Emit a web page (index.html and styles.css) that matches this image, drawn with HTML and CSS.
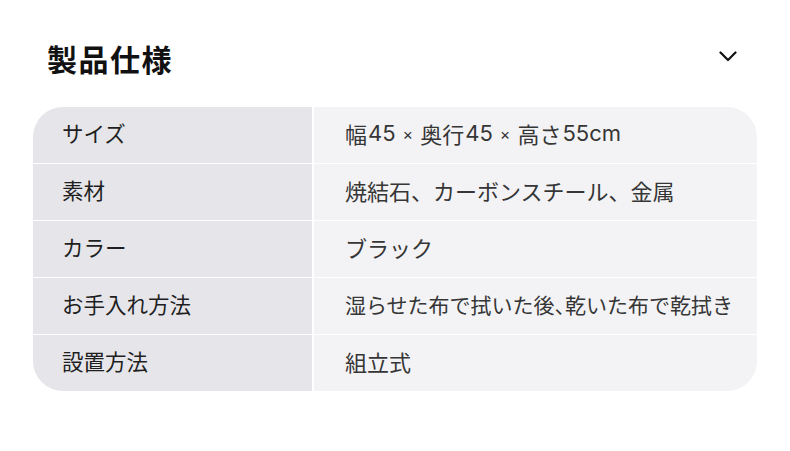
FILE: index.html
```html
<!DOCTYPE html>
<html lang="ja">
<head>
<meta charset="utf-8">
<link rel="stylesheet" href="styles.css">
</head>
<body>
<section class="spec">
  <div class="spec-header">
    <h2 class="spec-title">製品仕様</h2>
    <svg class="chevron" width="18" height="11" viewBox="0 0 18 11" aria-hidden="true">
      <path d="M1.5 1.5 L9 9 L16.5 1.5" fill="none" stroke="#111" stroke-width="2.2" stroke-linecap="round" stroke-linejoin="round"/>
    </svg>
  </div>
  <div class="spec-table">
    <div class="cell label">サイズ</div>
    <div class="cell value">幅<span class="latin">45</span><span class="times">×</span>奥行<span class="latin">45</span><span class="times">×</span>高さ<span class="latin">55cm</span></div>
    <div class="cell label">素材</div>
    <div class="cell value">焼結石、カーボンスチール、金属</div>
    <div class="cell label">カラー</div>
    <div class="cell value">ブラック</div>
    <div class="cell label">お手入れ方法</div>
    <div class="cell value fit">湿らせた布で拭いた後<span class="half">、</span>乾いた布で乾拭き</div>
    <div class="cell label">設置方法</div>
    <div class="cell value">組立式</div>
  </div>
</section>
</body>
</html>
```
FILE: styles.css
```css
html, body {
  margin: 0;
  padding: 0;
  background: #ffffff;
}
body {
  font-family: "Noto Sans CJK JP", "Noto Sans", sans-serif;
}
.spec {
  padding: 29px 33px 0 33px;
}
.spec-header {
  height: 60px;
  display: flex;
  align-items: center;
  justify-content: space-between;
  padding: 0 20px 0 14px;
  margin-bottom: 18px;
}
.spec-title {
  margin: 0;
  font-size: 30px;
  font-weight: 700;
  color: #111111;
  letter-spacing: 1.5px;
  line-height: 1;
  margin-top: -3px;
}
.chevron {
  display: block;
  margin-top: -5px;
}
.spec-table {
  display: grid;
  grid-template-columns: 279px 1fr;
  grid-auto-rows: 56px;
  column-gap: 2px;
  row-gap: 1px;
  border-radius: 30px;
  overflow: hidden;
  background: #ffffff;
}
.cell {
  display: flex;
  align-items: center;
  font-size: 22px;
  line-height: 1;
  padding-bottom: 4px;
  box-sizing: border-box;
}
.label {
  background: #e6e6ea;
  padding-left: 29px;
  font-size: 21.5px;
  color: #1f1f1f;
}
.value {
  background: #f3f3f5;
  padding-left: 31px;
  color: #363636;
}
.value.fit {
  font-size: 21px;
}
.latin {
  font-family: "Inter", "Noto Sans", sans-serif;
  font-size: 22px;
  margin-left: 1px;
}
.times {
  font-family: "Inter", sans-serif;
  font-size: 16px;
  margin: 0 7px;
  position: relative;
  top: 1px;
}
.half {
  letter-spacing: -0.5em;
}
```
